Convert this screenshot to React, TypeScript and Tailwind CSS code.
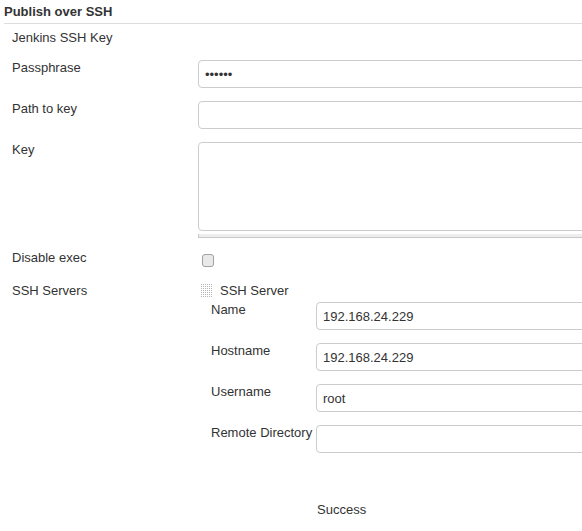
import React from 'react';

function DragHandle() {
  const dots = [];
  for (let r = 0; r < 7; r++) {
    for (let c = 0; c < 6; c++) {
      dots.push(<rect key={`${r}-${c}`} x={c * 2} y={r * 2} width="1" height="1" fill="#b5b5b5" />);
    }
  }
  return (
    <svg width="12" height="14" viewBox="0 0 12 14" className="block">
      {dots}
    </svg>
  );
}

function Field({ value = '', type = 'text' }: { value?: string; type?: string }) {
  return (
    <input
      type={type}
      readOnly
      value={value}
      className="mt-[1px] h-[28px] w-[460px] shrink-0 rounded-[4px] border border-[#cccccc] bg-white px-[6px] text-[13px] text-[#333] outline-none"
    />
  );
}

export default function App() {
  return (
    <div className="h-[531px] w-[582px] overflow-hidden bg-white font-['Liberation_Sans',Arial,sans-serif] text-[13px] leading-[18px] text-[#333]">
      {/* section header */}
      <div className="pl-1 pt-[3px]">
        <div className="border-b border-[#dddddd] pb-[2px] font-bold">Publish over SSH</div>
      </div>

      <div className="pl-3 pt-[5px]">
        <div>Jenkins SSH Key</div>

        <div className="mt-[12px] flex">
          <div className="w-[186px] shrink-0">Passphrase</div>
          <Field type="password" value="123456" />
        </div>

        <div className="mt-[12px] flex">
          <div className="w-[186px] shrink-0">Path to key</div>
          <Field />
        </div>

        <div className="mt-[12px] flex">
          <div className="w-[186px] shrink-0">Key</div>
          <div className="shrink-0">
            <div className="mt-[1px] h-[89px] w-[460px] rounded-[4px] border border-[#cccccc] bg-white" />
            <div className="mt-[3px] h-[4px] w-[460px] border-b border-l border-[#c8c8c8] bg-[#eeeeee]" />
          </div>
        </div>

        <div className="mt-[11px] flex">
          <div className="w-[186px] shrink-0">Disable exec</div>
          <div className="ml-[4px] mt-[5px] h-[13px] w-[12px] rounded-[3px] border border-[#a0a0a0] bg-[#e9e9e9]" />
        </div>

        <div className="mt-[15px] flex">
          <div className="w-[186px] shrink-0">SSH Servers</div>
          <div className="shrink-0">
            <div className="flex items-start">
              <div className="ml-[3px] mt-[2px]">
                <DragHandle />
              </div>
              <div className="ml-[7px]">SSH Server</div>
            </div>

            <div className="pl-[13px]">
              {[
                ['Name', '192.168.24.229'],
                ['Hostname', '192.168.24.229'],
                ['Username', 'root'],
                ['Remote Directory', ''],
              ].map(([label, value], i) => (
                <div key={label} className={`flex ${i === 0 ? 'mt-[1px]' : 'mt-[12px]'}`}>
                  <div className="w-[105px] shrink-0 whitespace-nowrap">{label}</div>
                  <Field value={value} />
                </div>
              ))}
              <div className="ml-[106px] mt-[48px]">Success</div>
            </div>
          </div>
        </div>
      </div>
    </div>
  );
}
